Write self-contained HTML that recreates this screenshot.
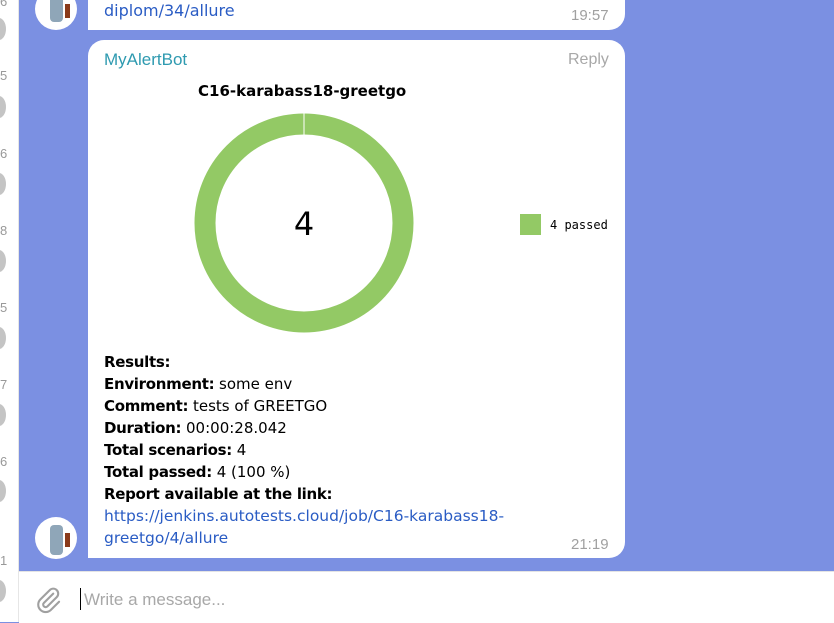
<!DOCTYPE html>
<html><head><style>
body{margin:0;width:834px;height:622px;overflow:hidden;background:#7b90e2;font-family:"Liberation Sans","DejaVu Sans",sans-serif;position:relative}
.left{position:absolute;left:0;top:0;width:18px;height:622px;background:#fff;border-right:1px solid #e6e6e6}
.c{position:absolute;left:-8px;width:14px;height:22px;border-radius:50%;background:#c4c4c4}
.n{position:absolute;left:0;font-size:13px;color:#999}
.bub{position:absolute;background:#fff;border-radius:16px}
.av{position:absolute;width:42px;height:42px;border-radius:50%;background:#fff;overflow:hidden}
.t{font-family:"DejaVu Sans",sans-serif;font-size:15px;line-height:22px;color:#000}
.t b{letter-spacing:-0.3px}
a{color:#2a5cc4;text-decoration:none}
</style></head><body>
<div class="left">
<div class="n" style="top:-6px">6</div><div class="c" style="top:18px"></div>
<div class="n" style="top:68px">5</div><div class="c" style="top:96px"></div>
<div class="n" style="top:146px">6</div><div class="c" style="top:173px"></div>
<div class="n" style="top:223px">8</div><div class="c" style="top:250px"></div>
<div class="n" style="top:300px">5</div><div class="c" style="top:327px"></div>
<div class="n" style="top:377px">7</div><div class="c" style="top:404px"></div>
<div class="n" style="top:454px">6</div><div class="c" style="top:480px"></div>
<div class="n" style="top:553px">1</div><div class="c" style="top:580px"></div>
</div>
<div class="av" style="left:35px;top:-12px"><svg width="42" height="42"><rect x="15" y="8" width="13" height="26" rx="4" fill="#8fa6b8"/><rect x="30" y="16" width="5" height="14" fill="#8a3a1a"/></svg></div>
<div class="bub" style="left:88px;top:-16px;width:537px;height:46px;border-bottom-left-radius:0"></div>
<div class="t" style="position:absolute;left:104px;top:0;font-size:16px"><a>diplom/34/allure</a></div>
<div style="position:absolute;left:571px;top:7px;font-size:15px;color:#a0a0a0">19:57</div>

<div class="bub" style="left:88px;top:40px;width:537px;height:518px;border-bottom-left-radius:0"></div>
<div style="position:absolute;left:104px;top:50px;font-size:17px;color:#2e9ab0">MyAlertBot</div>
<div style="position:absolute;left:568px;top:51px;font-size:16px;color:#a8a8a8">Reply</div>
<div style="position:absolute;left:198px;top:82px;font-family:'DejaVu Sans',sans-serif;font-weight:bold;font-size:15px">C16-karabass18-greetgo</div>
<svg style="position:absolute;left:190px;top:110px" width="230" height="230">
<circle cx="114" cy="113" r="99" fill="none" stroke="#93c965" stroke-width="21"/>
<line x1="114" y1="3" x2="114" y2="25" stroke="#fff" stroke-width="1"/>
<text x="114" y="125" text-anchor="middle" font-family="DejaVu Sans" font-size="32">4</text>
</svg>
<div style="position:absolute;left:520px;top:214px;width:21px;height:21px;background:#93c965"></div>
<div style="position:absolute;left:550px;top:218px;font-family:'DejaVu Sans Mono',monospace;font-size:12px">4 passed</div>
<div class="t" style="position:absolute;left:104px;top:351px">
<b>Results:</b><br><b>Environment:</b> some env<br><b>Comment:</b> tests of GREETGO<br><b>Duration:</b> 00:00:28.042<br><b>Total scenarios:</b> 4<br><b>Total passed:</b> 4 (100 %)<br><b>Report available at the link:</b><br><a style="font-size:15.5px">https://jenkins.autotests.cloud/job/C16-karabass18-<br>greetgo/4/allure</a></div>
<div style="position:absolute;left:571px;top:536px;font-size:15px;color:#a0a0a0">21:19</div>
<div class="av" style="left:35px;top:517px"><svg width="42" height="42"><rect x="15" y="8" width="13" height="30" rx="4" fill="#8fa6b8"/><rect x="30" y="16" width="5" height="14" fill="#8a3a1a"/></svg></div>

<div style="position:absolute;left:19px;top:571px;width:815px;height:51px;background:#fff;border-top:1px solid #e4e4e4"></div>
<svg style="position:absolute;left:34px;top:586px" width="28" height="28" viewBox="0 0 24 24"><path d="M16.5 6.5l-8 8a2 2 0 0 0 3 3l8-8a4 4 0 0 0-6-6l-8 8a6 6 0 0 0 9 9l7-7" fill="none" stroke="#a0a0a0" stroke-width="1.8" stroke-linecap="round"/></svg>
<div style="position:absolute;left:80px;top:588px;width:1px;height:22px;background:#000"></div>
<div style="position:absolute;left:84px;top:590px;font-size:17px;color:#a8a8a8">Write a message...</div>
</body></html>
